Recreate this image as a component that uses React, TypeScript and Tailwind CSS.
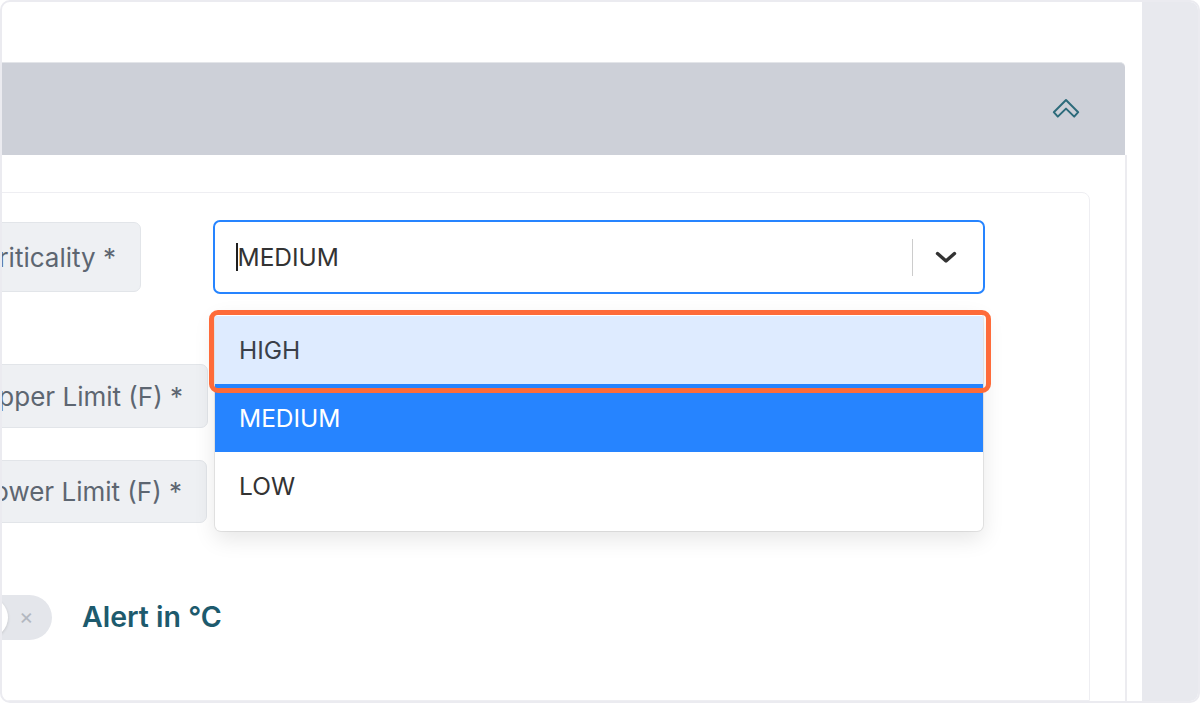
function ChevronsUp() {
  return (
    <svg width="28" height="22" viewBox="0 0 28 22" fill="none">
      <path
        d="M1.8 14.2 L14 2 L26.2 14.2 L22.2 18.6 L14 10.6 L5.8 18.6 Z"
        stroke="#2d6b7b"
        strokeWidth="2"
        strokeLinejoin="round"
      />
    </svg>
  );
}

function ChevronDown() {
  return (
    <svg width="22" height="13" viewBox="0 0 22 13" fill="none">
      <path d="M2.5 2.5 L11 10 L19.5 2.5" stroke="#333" strokeWidth="3.4" strokeLinecap="round" strokeLinejoin="round" />
    </svg>
  );
}

function Label({ text, w, h }: { text: string; w: string; h: string }) {
  return (
    <div
      className={`${w} ${h} shrink-0 rounded-[7px] border border-[#e2e5e9] bg-[#eef0f3] flex items-center justify-end pr-[24px] text-[26px] text-[#5d6671] whitespace-nowrap`}
    >
      {text}
    </div>
  );
}

const options = [
  { label: "HIGH", cls: "bg-[#deebff] text-[#3a3f4a]" },
  { label: "MEDIUM", cls: "bg-[#2684ff] text-white" },
  { label: "LOW", cls: "bg-white text-[#333]" },
];

export default function App() {
  return (
    <div className="w-[1200px] h-[703px] overflow-hidden rounded-[10px] border-2 border-[#ebebf0] bg-white flex font-['Inter','Liberation_Sans',sans-serif]">
      <div className="w-[1140px] shrink-0 pt-[60px]">
        <div className="w-[1125px] h-full flex flex-col">
          <div className="h-[93px] mr-[2px] shrink-0 bg-[#cdd0d8] rounded-tr-[5px] border-t border-[#e3e5e9] flex items-center justify-end pr-[45px]">
            <ChevronsUp />
          </div>

          <div className="flex-1 border-r-2 border-[#ececf0] pt-[37px]">
            <div className="-ml-[80px] mr-[35px] h-full rounded-tr-[8px] border border-[#eeeef2] pl-[17px] pt-[27px]">
              {/* Criticality */}
              <div className="flex items-center h-[74px]">
                <div className="w-[273px] shrink-0">
                  <Label text="Criticality *" w="w-[201px]" h="h-[70px]" />
                </div>
                <div className="relative w-[772px] h-[74px] shrink-0">
                  <div className="h-full rounded-[7px] border-[2.5px] border-[#2684ff] bg-white flex items-center pl-[21px]">
                    <span className="w-[1.5px] h-[28px] bg-[#1f1f1f]" />
                    <span className="text-[24.5px] text-[#333] leading-none">MEDIUM</span>
                    <div className="ml-auto flex items-center">
                      <span className="w-[1.5px] h-[37px] bg-[#cccccc]" />
                      <span className="ml-[22px] mr-[26px] flex">
                        <ChevronDown />
                      </span>
                    </div>
                  </div>

                  <div className="absolute left-[2px] right-[2px] top-[92px] z-10 rounded-[6px] bg-white pt-[4px] pb-[11px] shadow-[0_0_0_1px_rgba(0,0,0,0.08),0_8px_22px_rgba(0,0,0,0.1)] overflow-hidden">
                    {options.map((o) => (
                      <div key={o.label} className={`h-[68px] flex items-center pl-[24px] text-[24.5px] ${o.cls}`}>
                        {o.label}
                      </div>
                    ))}
                  </div>

                  <div className="absolute -left-[4px] top-[90px] z-20 w-[782px] h-[83px] rounded-[9px] border-[5px] border-[#fe6b3a] pointer-events-none" />
                </div>
              </div>

              {/* Upper limit */}
              <div className="flex items-center mt-[70px]">
                <Label text="Upper Limit (F) *" w="w-[268px]" h="h-[64px]" />
              </div>

              {/* Lower limit */}
              <div className="flex items-center mt-[32px]">
                <Label text="Lower Limit (F) *" w="w-[267px]" h="h-[63px]" />
              </div>

              {/* Alert toggle */}
              <div className="flex items-center h-[45px] mt-[72px]">
                <div className="relative ml-[25px] w-[87px] h-[45px] rounded-full bg-[#e4e6eb]">
                  <span className="absolute left-[2px] top-[2px] w-[41px] h-[41px] rounded-full bg-white shadow-[0_1px_3px_rgba(0,0,0,0.15)]" />
                  <span className="absolute left-[54px] top-[10px] text-[22px] leading-none text-[#b3b8c0]">×</span>
                </div>
                <span className="ml-[30px] text-[28.5px] font-semibold text-[#1d5a6d] whitespace-nowrap">Alert in °C</span>
              </div>
            </div>
          </div>
        </div>
      </div>
      <div className="flex-1 bg-[#e8e9ee]" />
    </div>
  );
}
